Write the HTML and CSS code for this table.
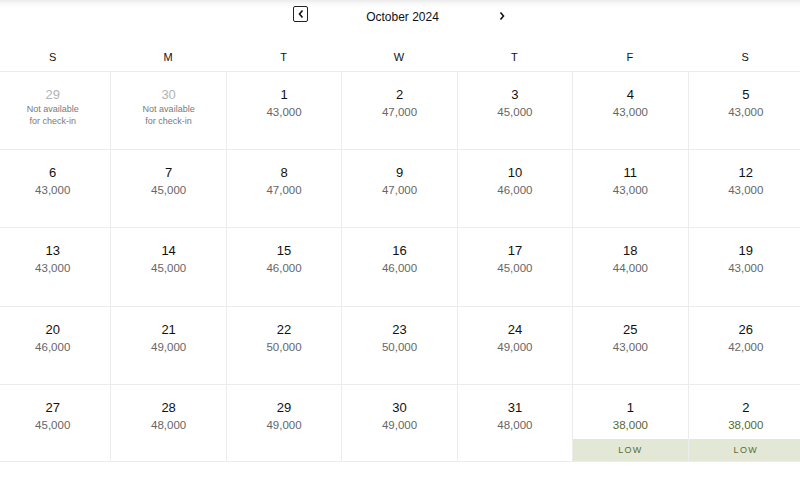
FILE: index.html
```html
<!DOCTYPE html>
<html>
<head>
<meta charset="utf-8">
<link rel="stylesheet" href="styles.css">
</head>
<body>
<div class="cal">
  <div class="nav">
    <button class="prev" aria-label="Previous month">
      <svg width="8" height="10" viewBox="0 0 8 10"><path d="M5.5 1.5 L2.5 5 L5.5 8.5" fill="none" stroke="#111" stroke-width="1.6"/></svg>
    </button>
    <div class="title">October 2024</div>
    <button class="next" aria-label="Next month">
      <svg width="8" height="10" viewBox="0 0 8 10"><path d="M2.5 1.5 L5.5 5 L2.5 8.5" fill="none" stroke="#111" stroke-width="1.6"/></svg>
    </button>
  </div>
  <div class="grid">
    <div class="wd">S</div><div class="wd">M</div><div class="wd">T</div><div class="wd">W</div><div class="wd">T</div><div class="wd">F</div><div class="wd">S</div>

    <div class="cell na"><div class="num">29</div><div class="note">Not available<br>for check-in</div></div>
    <div class="cell na"><div class="num">30</div><div class="note">Not available<br>for check-in</div></div>
    <div class="cell"><div class="num">1</div><div class="price">43,000</div></div>
    <div class="cell"><div class="num">2</div><div class="price">47,000</div></div>
    <div class="cell"><div class="num">3</div><div class="price">45,000</div></div>
    <div class="cell"><div class="num">4</div><div class="price">43,000</div></div>
    <div class="cell"><div class="num">5</div><div class="price">43,000</div></div>

    <div class="cell"><div class="num">6</div><div class="price">43,000</div></div>
    <div class="cell"><div class="num">7</div><div class="price">45,000</div></div>
    <div class="cell"><div class="num">8</div><div class="price">47,000</div></div>
    <div class="cell"><div class="num">9</div><div class="price">47,000</div></div>
    <div class="cell"><div class="num">10</div><div class="price">46,000</div></div>
    <div class="cell"><div class="num">11</div><div class="price">43,000</div></div>
    <div class="cell"><div class="num">12</div><div class="price">43,000</div></div>

    <div class="cell"><div class="num">13</div><div class="price">43,000</div></div>
    <div class="cell"><div class="num">14</div><div class="price">45,000</div></div>
    <div class="cell"><div class="num">15</div><div class="price">46,000</div></div>
    <div class="cell"><div class="num">16</div><div class="price">46,000</div></div>
    <div class="cell"><div class="num">17</div><div class="price">45,000</div></div>
    <div class="cell"><div class="num">18</div><div class="price">44,000</div></div>
    <div class="cell"><div class="num">19</div><div class="price">43,000</div></div>

    <div class="cell"><div class="num">20</div><div class="price">46,000</div></div>
    <div class="cell"><div class="num">21</div><div class="price">49,000</div></div>
    <div class="cell"><div class="num">22</div><div class="price">50,000</div></div>
    <div class="cell"><div class="num">23</div><div class="price">50,000</div></div>
    <div class="cell"><div class="num">24</div><div class="price">49,000</div></div>
    <div class="cell"><div class="num">25</div><div class="price">43,000</div></div>
    <div class="cell"><div class="num">26</div><div class="price">42,000</div></div>

    <div class="cell"><div class="num">27</div><div class="price">45,000</div></div>
    <div class="cell"><div class="num">28</div><div class="price">48,000</div></div>
    <div class="cell"><div class="num">29</div><div class="price">49,000</div></div>
    <div class="cell"><div class="num">30</div><div class="price">49,000</div></div>
    <div class="cell"><div class="num">31</div><div class="price">48,000</div></div>
    <div class="cell low"><div class="num">1</div><div class="price">38,000</div><div class="badge">LOW</div></div>
    <div class="cell low"><div class="num">2</div><div class="price">38,000</div><div class="badge">LOW</div></div>
  </div>
</div>
</body>
</html>
```

FILE: styles.css
```css
html, body {
  margin: 0;
  padding: 0;
  background: #fff;
  overflow: hidden;
}
body {
  font-family: "Liberation Sans", Arial, sans-serif;
  color: #111;
}
.cal {
  width: 800px;
  height: 479px;
  background: linear-gradient(to bottom, #ececec 0px, #fafafa 4px, #fff 8px);
}
.nav {
  height: 34px;
  display: flex;
  justify-content: center;
  align-items: flex-start;
  gap: 58px;
  box-sizing: border-box;
}
.nav button {
  border: none;
  background: none;
  padding: 0;
  display: flex;
  align-items: center;
  justify-content: center;
  cursor: pointer;
}
.prev {
  margin-top: 6px;
  width: 15px;
  height: 16px;
  border: 1.5px solid #222 !important;
  border-radius: 2px;
  box-sizing: border-box;
}
.next {
  margin-top: 10px;
  width: 10px;
  height: 12px;
}
.title {
  margin-top: 10px;
  font-size: 12px;
  line-height: 14px;
  color: #111;
}
.grid {
  display: grid;
  grid-template-columns: repeat(7, 1fr);
  grid-template-rows: 37px repeat(5, 78.2px);
  width: 808px;
  margin-left: -5px;
}
.wd {
  font-size: 11px;
  line-height: 13px;
  text-align: center;
  align-self: end;
  padding-bottom: 7px;
  color: #111;
}
.cell {
  position: relative;
  border-top: 1px solid #ececec;
  border-left: 1px solid #ececec;
  text-align: center;
  padding-top: 15px;
  box-sizing: border-box;
}
.cell:nth-child(7n+1) {
  border-left: none;
}
.grid > .cell:nth-last-child(-n+7) {
  border-bottom: 1px solid #ececec;
}
.num {
  font-size: 13px;
  line-height: 16px;
  color: #111;
}
.price {
  font-size: 11.5px;
  line-height: 16px;
  margin-top: 1px;
  color: #666;
}
.na .num {
  color: #b3b3b3;
}
.note {
  font-size: 9px;
  line-height: 12px;
  color: #7a7a7a;
}
.low .price {
  color: #56692b;
}
.badge {
  position: absolute;
  left: 0;
  right: 0;
  bottom: 0;
  height: 22px;
  background: #e2e8d5;
  color: #5a6c34;
  font-size: 9px;
  letter-spacing: 1.3px;
  line-height: 22px;
  text-align: center;
}
```
